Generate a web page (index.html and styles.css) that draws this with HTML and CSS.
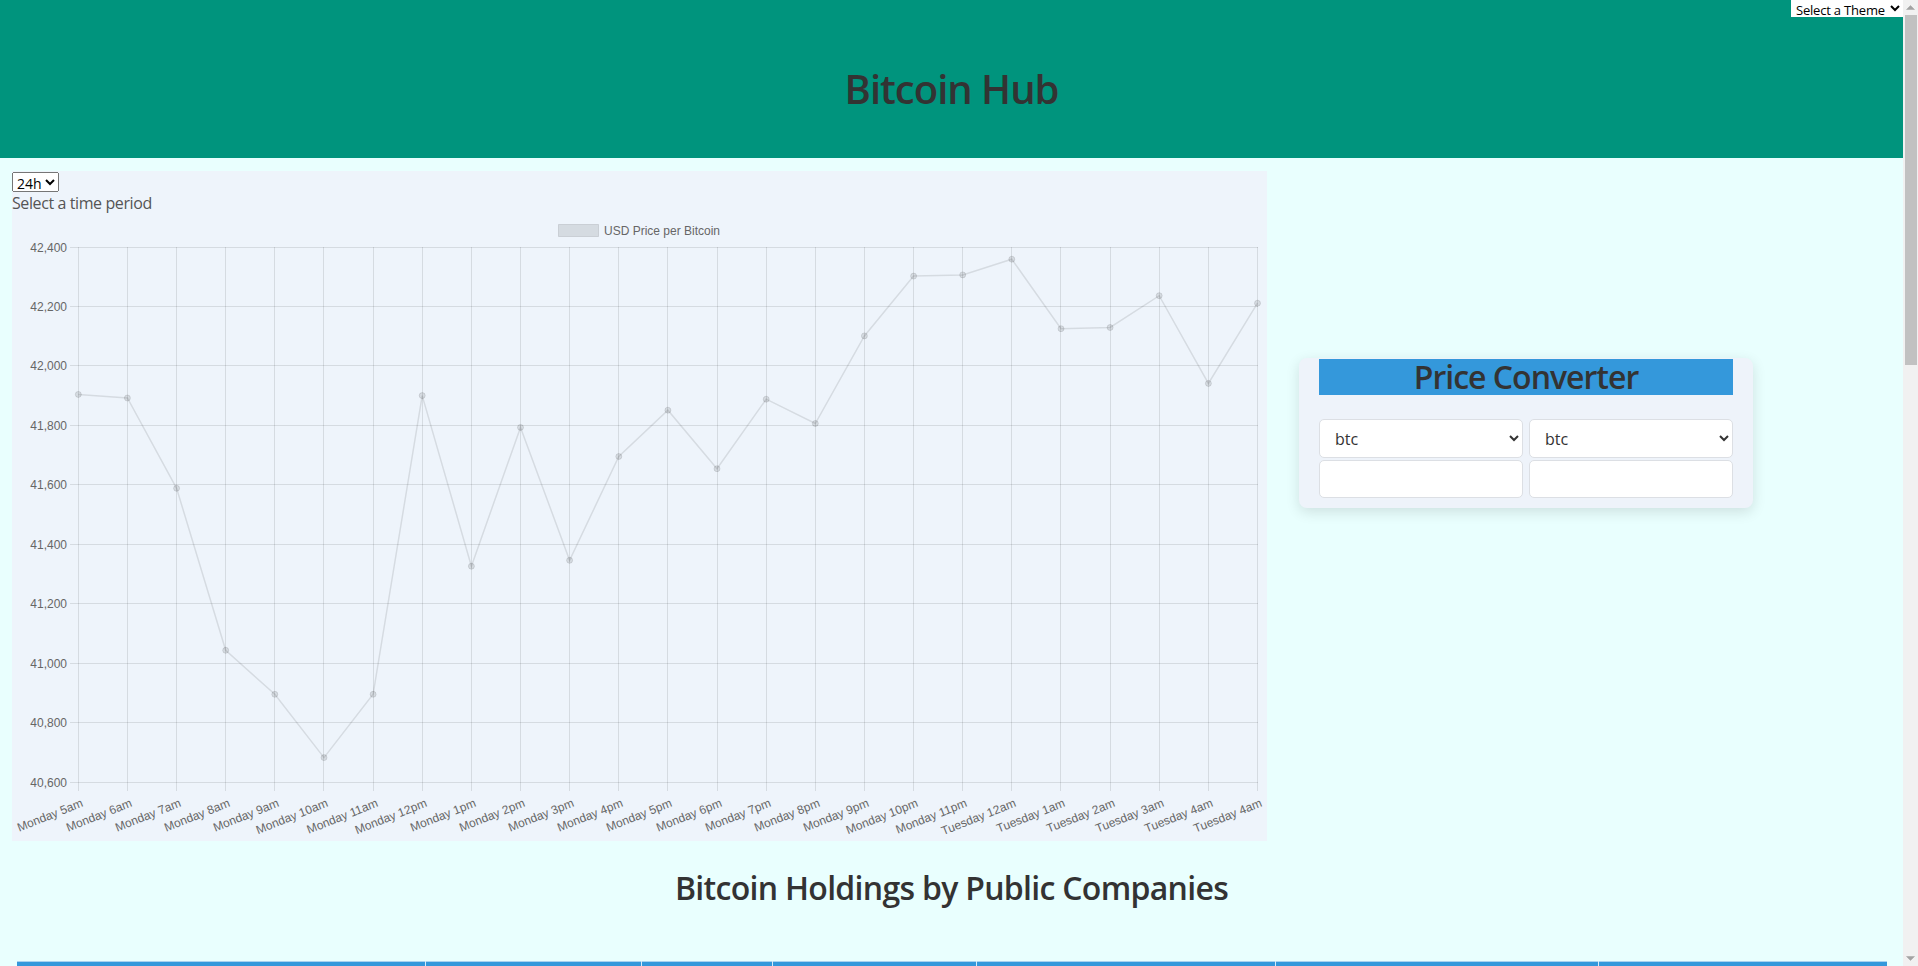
FILE: index.html
```html
<!DOCTYPE html>
<html lang="en">
<head>
<meta charset="utf-8">
<title>Bitcoin Hub</title>
<link rel="stylesheet" href="styles.css">
</head>
<body>
<div class="page">
<select class="theme-select">
  <option>Select a Theme</option>
  <option>Light</option>
  <option>Dark</option>
</select>
<header class="site-header">
  <h1 class="site-title">Bitcoin Hub</h1>
</header>
<main>
  <section class="top-row">
    <div class="chart-panel">
      <select class="period-select">
        <option>24h</option>
        <option>7d</option>
        <option>30d</option>
        <option>1y</option>
      </select>
      <label class="period-label">Select a time period</label>
      <svg class="chart" width="1255" height="627" viewBox="0 0 1255 627">
        <g class="legend">
          <rect class="legend-box" x="546.5" y="10.5" width="40" height="12"></rect>
          <text class="chart-text" x="592" y="20.5">USD Price per Bitcoin</text>
        </g>
        <g class="grid">
          <line x1="58" y1="33.5" x2="1246" y2="33.5"></line>
          <line x1="58" y1="92.5" x2="1246" y2="92.5"></line>
          <line x1="58" y1="151.5" x2="1246" y2="151.5"></line>
          <line x1="58" y1="211.5" x2="1246" y2="211.5"></line>
          <line x1="58" y1="270.5" x2="1246" y2="270.5"></line>
          <line x1="58" y1="330.5" x2="1246" y2="330.5"></line>
          <line x1="58" y1="389.5" x2="1246" y2="389.5"></line>
          <line x1="58" y1="449.5" x2="1246" y2="449.5"></line>
          <line x1="58" y1="508.5" x2="1246" y2="508.5"></line>
          <line x1="58" y1="568.5" x2="1246" y2="568.5"></line>
          <line x1="66.5" y1="33" x2="66.5" y2="577"></line>
          <line x1="115.5" y1="33" x2="115.5" y2="577"></line>
          <line x1="164.5" y1="33" x2="164.5" y2="577"></line>
          <line x1="213.5" y1="33" x2="213.5" y2="577"></line>
          <line x1="262.5" y1="33" x2="262.5" y2="577"></line>
          <line x1="311.5" y1="33" x2="311.5" y2="577"></line>
          <line x1="361.5" y1="33" x2="361.5" y2="577"></line>
          <line x1="410.5" y1="33" x2="410.5" y2="577"></line>
          <line x1="459.5" y1="33" x2="459.5" y2="577"></line>
          <line x1="508.5" y1="33" x2="508.5" y2="577"></line>
          <line x1="557.5" y1="33" x2="557.5" y2="577"></line>
          <line x1="606.5" y1="33" x2="606.5" y2="577"></line>
          <line x1="655.5" y1="33" x2="655.5" y2="577"></line>
          <line x1="705.5" y1="33" x2="705.5" y2="577"></line>
          <line x1="754.5" y1="33" x2="754.5" y2="577"></line>
          <line x1="803.5" y1="33" x2="803.5" y2="577"></line>
          <line x1="852.5" y1="33" x2="852.5" y2="577"></line>
          <line x1="901.5" y1="33" x2="901.5" y2="577"></line>
          <line x1="950.5" y1="33" x2="950.5" y2="577"></line>
          <line x1="999.5" y1="33" x2="999.5" y2="577"></line>
          <line x1="1048.5" y1="33" x2="1048.5" y2="577"></line>
          <line x1="1098.5" y1="33" x2="1098.5" y2="577"></line>
          <line x1="1147.5" y1="33" x2="1147.5" y2="577"></line>
          <line x1="1196.5" y1="33" x2="1196.5" y2="577"></line>
          <line x1="1245.5" y1="33" x2="1245.5" y2="577"></line>
        </g>
        <g class="ylabels">
          <text class="chart-text" x="55" y="37.5">42,400</text>
          <text class="chart-text" x="55" y="96.5">42,200</text>
          <text class="chart-text" x="55" y="155.5">42,000</text>
          <text class="chart-text" x="55" y="215.5">41,800</text>
          <text class="chart-text" x="55" y="274.5">41,600</text>
          <text class="chart-text" x="55" y="334.5">41,400</text>
          <text class="chart-text" x="55" y="393.5">41,200</text>
          <text class="chart-text" x="55" y="453.5">41,000</text>
          <text class="chart-text" x="55" y="512.5">40,800</text>
          <text class="chart-text" x="55" y="572.5">40,600</text>
        </g>
        <g class="xlabels">
          <text class="chart-text" transform="translate(68.5 584) rotate(-21.6)">Monday 5am</text>
          <text class="chart-text" transform="translate(117.5 584) rotate(-21.6)">Monday 6am</text>
          <text class="chart-text" transform="translate(166.5 584) rotate(-21.6)">Monday 7am</text>
          <text class="chart-text" transform="translate(215.5 584) rotate(-21.6)">Monday 8am</text>
          <text class="chart-text" transform="translate(264.5 584) rotate(-21.6)">Monday 9am</text>
          <text class="chart-text" transform="translate(313.5 584) rotate(-21.6)">Monday 10am</text>
          <text class="chart-text" transform="translate(363.5 584) rotate(-21.6)">Monday 11am</text>
          <text class="chart-text" transform="translate(412.5 584) rotate(-21.6)">Monday 12pm</text>
          <text class="chart-text" transform="translate(461.5 584) rotate(-21.6)">Monday 1pm</text>
          <text class="chart-text" transform="translate(510.5 584) rotate(-21.6)">Monday 2pm</text>
          <text class="chart-text" transform="translate(559.5 584) rotate(-21.6)">Monday 3pm</text>
          <text class="chart-text" transform="translate(608.5 584) rotate(-21.6)">Monday 4pm</text>
          <text class="chart-text" transform="translate(657.5 584) rotate(-21.6)">Monday 5pm</text>
          <text class="chart-text" transform="translate(707.5 584) rotate(-21.6)">Monday 6pm</text>
          <text class="chart-text" transform="translate(756.5 584) rotate(-21.6)">Monday 7pm</text>
          <text class="chart-text" transform="translate(805.5 584) rotate(-21.6)">Monday 8pm</text>
          <text class="chart-text" transform="translate(854.5 584) rotate(-21.6)">Monday 9pm</text>
          <text class="chart-text" transform="translate(903.5 584) rotate(-21.6)">Monday 10pm</text>
          <text class="chart-text" transform="translate(952.5 584) rotate(-21.6)">Monday 11pm</text>
          <text class="chart-text" transform="translate(1001.5 584) rotate(-21.6)">Tuesday 12am</text>
          <text class="chart-text" transform="translate(1050.5 584) rotate(-21.6)">Tuesday 1am</text>
          <text class="chart-text" transform="translate(1100.5 584) rotate(-21.6)">Tuesday 2am</text>
          <text class="chart-text" transform="translate(1149.5 584) rotate(-21.6)">Tuesday 3am</text>
          <text class="chart-text" transform="translate(1198.5 584) rotate(-21.6)">Tuesday 4am</text>
          <text class="chart-text" transform="translate(1247.5 584) rotate(-21.6)">Tuesday 4am</text>
        </g>
        <polyline class="price-line" points="66.3,180.4 115.4,184 164.6,274.3 213.7,436.3 262.8,480.3 312,543.6 361.1,480.3 410.2,181.6 459.4,352.2 508.5,213.4 557.6,346.3 606.8,242.5 655.9,196.2 705,254.7 754.2,185.2 803.3,209.5 852.4,121.9 901.6,62.1 950.7,60.9 999.8,45.2 1049,114.7 1098.1,113.5 1147.2,81.7 1196.4,169.4 1245.5,89.2"></polyline>
        <g class="points">
          <circle cx="66.3" cy="180.4" r="3"></circle>
          <circle cx="115.4" cy="184" r="3"></circle>
          <circle cx="164.6" cy="274.3" r="3"></circle>
          <circle cx="213.7" cy="436.3" r="3"></circle>
          <circle cx="262.8" cy="480.3" r="3"></circle>
          <circle cx="312" cy="543.6" r="3"></circle>
          <circle cx="361.1" cy="480.3" r="3"></circle>
          <circle cx="410.2" cy="181.6" r="3"></circle>
          <circle cx="459.4" cy="352.2" r="3"></circle>
          <circle cx="508.5" cy="213.4" r="3"></circle>
          <circle cx="557.6" cy="346.3" r="3"></circle>
          <circle cx="606.8" cy="242.5" r="3"></circle>
          <circle cx="655.9" cy="196.2" r="3"></circle>
          <circle cx="705" cy="254.7" r="3"></circle>
          <circle cx="754.2" cy="185.2" r="3"></circle>
          <circle cx="803.3" cy="209.5" r="3"></circle>
          <circle cx="852.4" cy="121.9" r="3"></circle>
          <circle cx="901.6" cy="62.1" r="3"></circle>
          <circle cx="950.7" cy="60.9" r="3"></circle>
          <circle cx="999.8" cy="45.2" r="3"></circle>
          <circle cx="1049" cy="114.7" r="3"></circle>
          <circle cx="1098.1" cy="113.5" r="3"></circle>
          <circle cx="1147.2" cy="81.7" r="3"></circle>
          <circle cx="1196.4" cy="169.4" r="3"></circle>
          <circle cx="1245.5" cy="89.2" r="3"></circle>
        </g>
      </svg>
    </div>
    <div class="converter-col">
      <div class="converter-card">
        <h2 class="converter-title">Price Converter</h2>
        <div class="converter-grid">
          <select class="conv-select">
            <option>btc</option>
            <option>eth</option>
            <option>usd</option>
            <option>eur</option>
          </select>
          <select class="conv-select">
            <option>btc</option>
            <option>eth</option>
            <option>usd</option>
            <option>eur</option>
          </select>
          <input class="conv-input" type="number">
          <input class="conv-input" type="number">
        </div>
      </div>
    </div>
  </section>

  <h2 class="section-title">Bitcoin Holdings by Public Companies</h2>

  <table class="holdings">
    <colgroup>
      <col class="col-name">
      <col class="col-symbol">
      <col class="col-country">
      <col class="col-holdings">
      <col class="col-entry">
      <col class="col-current">
      <col class="col-supply">
    </colgroup>
    <thead>
      <tr>
        <th>Company</th>
        <th>Symbol</th>
        <th>Country</th>
        <th>Total Holdings</th>
        <th>Total Entry Value (USD)</th>
        <th>Total Current Value (USD)</th>
        <th>% of Total Supply</th>
      </tr>
    </thead>
    <tbody>
      <tr><td>MicroStrategy Inc.</td><td>MSTR:NASDAQ</td><td>US</td><td>124,391</td><td>3,777,000,000</td><td>5,254,000,000</td><td>0.592%</td></tr>
      <tr><td>Tesla</td><td>TSLA:NASDAQ</td><td>US</td><td>43,200</td><td>1,500,000,000</td><td>1,824,000,000</td><td>0.206%</td></tr>
      <tr><td>Galaxy Digital Holdings Ltd</td><td>GLXY:TSX</td><td>US</td><td>16,400</td><td>134,000,000</td><td>692,600,000</td><td>0.078%</td></tr>
      <tr><td>Voyager Digital LTD</td><td>VYGR:CSE</td><td>CA</td><td>12,260</td><td>0</td><td>517,700,000</td><td>0.058%</td></tr>
      <tr><td>Marathon Patent Group</td><td>MARA:NASDAQ</td><td>US</td><td>8,133</td><td>150,000,000</td><td>343,500,000</td><td>0.039%</td></tr>
      <tr><td>Square Inc.</td><td>SQ:NYSE</td><td>US</td><td>8,027</td><td>220,000,000</td><td>339,000,000</td><td>0.038%</td></tr>
      <tr><td>Hut 8 Mining Corp</td><td>HUT:TSX</td><td>CA</td><td>5,518</td><td>0</td><td>233,000,000</td><td>0.026%</td></tr>
      <tr><td>Riot Blockchain, Inc.</td><td>RIOT:NASDAQ</td><td>US</td><td>4,884</td><td>0</td><td>206,300,000</td><td>0.023%</td></tr>
      <tr><td>Coinbase Global, Inc.</td><td>COIN:NASDAQ</td><td>US</td><td>4,487</td><td>0</td><td>189,500,000</td><td>0.021%</td></tr>
      <tr><td>Bitcoin Group SE</td><td>BTGGF:OTCMKTS</td><td>DE</td><td>3,947</td><td>0</td><td>166,700,000</td><td>0.019%</td></tr>
      <tr><td>Hive Blockchain</td><td>HIVE:CVE</td><td>CA</td><td>2,568</td><td>0</td><td>108,400,000</td><td>0.012%</td></tr>
      <tr><td>NEXON Co Ltd</td><td>3659:TYO</td><td>JP</td><td>1,717</td><td>100,000,000</td><td>72,500,000</td><td>0.008%</td></tr>
      <tr><td>Bitfarms Limited</td><td>BITF:NASDAQ</td><td>CA</td><td>3,301</td><td>0</td><td>139,400,000</td><td>0.016%</td></tr>
      <tr><td>Argo Blockchain PLC</td><td>ARB:LON</td><td>UK</td><td>2,140</td><td>0</td><td>90,400,000</td><td>0.010%</td></tr>
      <tr><td>Meitu</td><td>HKG:1357</td><td>HK</td><td>940</td><td>49,500,000</td><td>39,700,000</td><td>0.004%</td></tr>
      <tr><td>Brooker Group's (BROOK)</td><td>BROOK:BKK</td><td>TH</td><td>845</td><td>22,500,000</td><td>35,700,000</td><td>0.004%</td></tr>
      <tr><td>Bit Digital, Inc.</td><td>BTBT:NASDAQ</td><td>US</td><td>1,020</td><td>0</td><td>43,100,000</td><td>0.005%</td></tr>
      <tr><td>DMG Blockchain Solutions</td><td>DMGI:CVE</td><td>CA</td><td>424</td><td>0</td><td>17,900,000</td><td>0.002%</td></tr>
      <tr><td>BIGG Digital Assets Inc</td><td>BIGG:CVE</td><td>CA</td><td>265</td><td>0</td><td>11,200,000</td><td>0.001%</td></tr>
      <tr><td>Advanced Bitcoin Technologies AG</td><td>ABT:GR</td><td>DE</td><td>254</td><td>0</td><td>10,700,000</td><td>0.001%</td></tr>
      <tr><td>Cypherpunk Holdings Inc</td><td>HODL:CSE</td><td>CA</td><td>233</td><td>0</td><td>9,800,000</td><td>0.001%</td></tr>
      <tr><td>Banxa Holdings Inc</td><td>BNXA:CVE</td><td>CA</td><td>136</td><td>0</td><td>5,700,000</td><td>0.001%</td></tr>
      <tr><td>FRMO Corp</td><td>FRMO:OTCMKTS</td><td>US</td><td>63</td><td>0</td><td>2,700,000</td><td>0.000%</td></tr>
      <tr><td>Mogo Inc.</td><td>MOGO:NASDAQ</td><td>CA</td><td>18</td><td>0</td><td>760,000</td><td>0.000%</td></tr>
      <tr><td>Net Holding Anonim Sirketi</td><td>NTHOL TI:IST</td><td>TR</td><td>7</td><td>0</td><td>295,000</td><td>0.000%</td></tr>
      <tr><td>Seetee AS</td><td>AKER:OSE</td><td>NO</td><td>1,170</td><td>58,000,000</td><td>49,400,000</td><td>0.006%</td></tr>
      <tr><td>Exodus Movement Inc</td><td>EXOD:OTCMKTS</td><td>US</td><td>1,000</td><td>0</td><td>42,200,000</td><td>0.005%</td></tr>
      <tr><td>Neptune Digital Assets</td><td>NDA:CVE</td><td>CA</td><td>310</td><td>0</td><td>13,100,000</td><td>0.001%</td></tr>
      <tr><td>Digihost Technology</td><td>DGHI:CVE</td><td>CA</td><td>316</td><td>0</td><td>13,300,000</td><td>0.002%</td></tr>
      <tr><td>Cathedra Bitcoin Inc</td><td>CBIT:CVE</td><td>CA</td><td>217</td><td>0</td><td>9,200,000</td><td>0.001%</td></tr>
    </tbody>
  </table>
</main>
</div>
<div class="scrollbar" aria-hidden="true">
  <div class="scroll-btn">
    <svg class="scroll-arrow" width="9" height="5" viewBox="0 0 9 5"><path d="M0.5 4.5 L4.5 0.5 L8.5 4.5 Z"></path></svg>
  </div>
  <div class="scroll-thumb"></div>
  <div class="scroll-track"></div>
  <div class="scroll-btn">
    <svg class="scroll-arrow" width="9" height="5" viewBox="0 0 9 5"><path d="M0.5 0.5 L4.5 4.5 L8.5 0.5 Z"></path></svg>
  </div>
</div>
</body>
</html>
```

FILE: styles.css
```css
html,
body {
  margin: 0;
  padding: 0;
}

body {
  background: #e9fffe;
  font-family: "Open Sans", "Noto Sans", sans-serif;
  color: #333;
}

.page {
  position: relative;
  margin-right: 15px;
}

/* window scrollbar as seen in the screenshot */
.scrollbar {
  position: fixed;
  top: 0;
  right: 0;
  bottom: 0;
  width: 15px;
  display: flex;
  flex-direction: column;
  background: #f1f1f1;
}

.scroll-btn {
  height: 15px;
  flex: none;
  display: flex;
  align-items: center;
  justify-content: center;
}

.scroll-arrow path {
  fill: #a3a3a3;
  stroke: #a3a3a3;
  stroke-width: 0.5;
}

.scroll-thumb {
  flex: none;
  height: 350px;
  margin: 0 1px 0 2px;
  background: #c1c1c1;
}

.scroll-track {
  flex: 1;
}

.theme-select {
  position: absolute;
  top: 0;
  right: 0;
  width: 112px;
  height: 17px;
  padding: 0 0 0 1px;
  border: none;
  background: #fff;
  color: #000;
  font: 13px "Open Sans", sans-serif;
  letter-spacing: -0.2px;
}

.site-header {
  background: #00947d;
  padding: 62px 0 42px;
  text-align: center;
}

.site-title {
  margin: 0;
  font-size: 40px;
  line-height: 54px;
  font-weight: 600;
  letter-spacing: -1px;
  color: #333;
}

.top-row {
  display: flex;
  align-items: flex-start;
  padding: 13px 0 0 12px;
}

.chart-panel {
  width: 1255px;
  flex: none;
  background: #eef4fb;
}

.period-select {
  display: block;
  margin-top: 1px;
  height: 20px;
  font: 14px "Open Sans", sans-serif;
  color: #000;
}

.period-label {
  display: block;
  font-size: 16px;
  line-height: 22px;
  letter-spacing: -0.4px;
  color: #555;
}

.chart {
  display: block;
}

.chart-text {
  font: 12px "Liberation Sans", Arial, sans-serif;
  fill: #666;
}

.ylabels .chart-text {
  text-anchor: end;
}

.xlabels .chart-text {
  text-anchor: end;
  dominant-baseline: hanging;
}

.legend-box {
  fill: rgba(0, 0, 0, 0.1);
  stroke: rgba(0, 0, 0, 0.1);
  stroke-width: 1;
}

.grid line {
  stroke: rgba(0, 0, 0, 0.1);
  stroke-width: 1;
}

.price-line {
  fill: none;
  stroke: rgba(0, 0, 0, 0.1);
  stroke-width: 1.5;
}

.points circle {
  fill: rgba(0, 0, 0, 0.1);
  stroke: rgba(0, 0, 0, 0.1);
  stroke-width: 1;
}

.converter-col {
  padding: 187px 0 0 32px;
}

.converter-card {
  width: 414px;
  padding: 1px 20px 10px;
  background: #eef3fa;
  border-radius: 8px;
  box-shadow: 0 4px 14px rgba(0, 0, 0, 0.12);
}

.converter-title {
  margin: 0 0 24px;
  height: 36px;
  background: #3498db;
  font-size: 32px;
  line-height: 36px;
  font-weight: 600;
  letter-spacing: -1px;
  text-align: center;
  color: #333;
}

.converter-grid {
  display: grid;
  grid-template-columns: 204px 204px;
  column-gap: 6px;
  row-gap: 2px;
}

.conv-select {
  height: 39px;
  padding: 0 8px 0 11px;
  border: 1px solid #dcdfe4;
  border-radius: 5px;
  background: #fff;
  color: #333;
  font: 16px "Open Sans", sans-serif;
}

.conv-input {
  box-sizing: border-box;
  height: 38px;
  border: 1px solid #dcdfe4;
  border-radius: 5px;
  background: #fff;
  font: 16px "Open Sans", sans-serif;
}

.section-title {
  margin: 25px 0 51px;
  font-size: 32px;
  line-height: 44px;
  font-weight: 600;
  letter-spacing: -0.7px;
  text-align: center;
  color: #333;
}

.holdings {
  table-layout: fixed;
  width: calc(100% - 33px);
  margin: 0 17px 40px 16px;
  border-collapse: collapse;
  border-top: 1px solid #a8d2f0;
  font-size: 16px;
}

.holdings th {
  background: #3498db;
  color: #fff;
  font-weight: 600;
  padding: 12px 10px;
  text-align: left;
  border-left: 1px solid #d7ecfa;
}

.holdings th:first-child {
  border-left: none;
}

.holdings td {
  padding: 12px 10px;
  border: 1px solid #cfe3ee;
}

.col-name { width: 409px; }
.col-symbol { width: 216px; }
.col-country { width: 131px; }
.col-holdings { width: 204px; }
.col-entry { width: 299px; }
.col-current { width: 323px; }
.col-supply { width: 288px; }
```
